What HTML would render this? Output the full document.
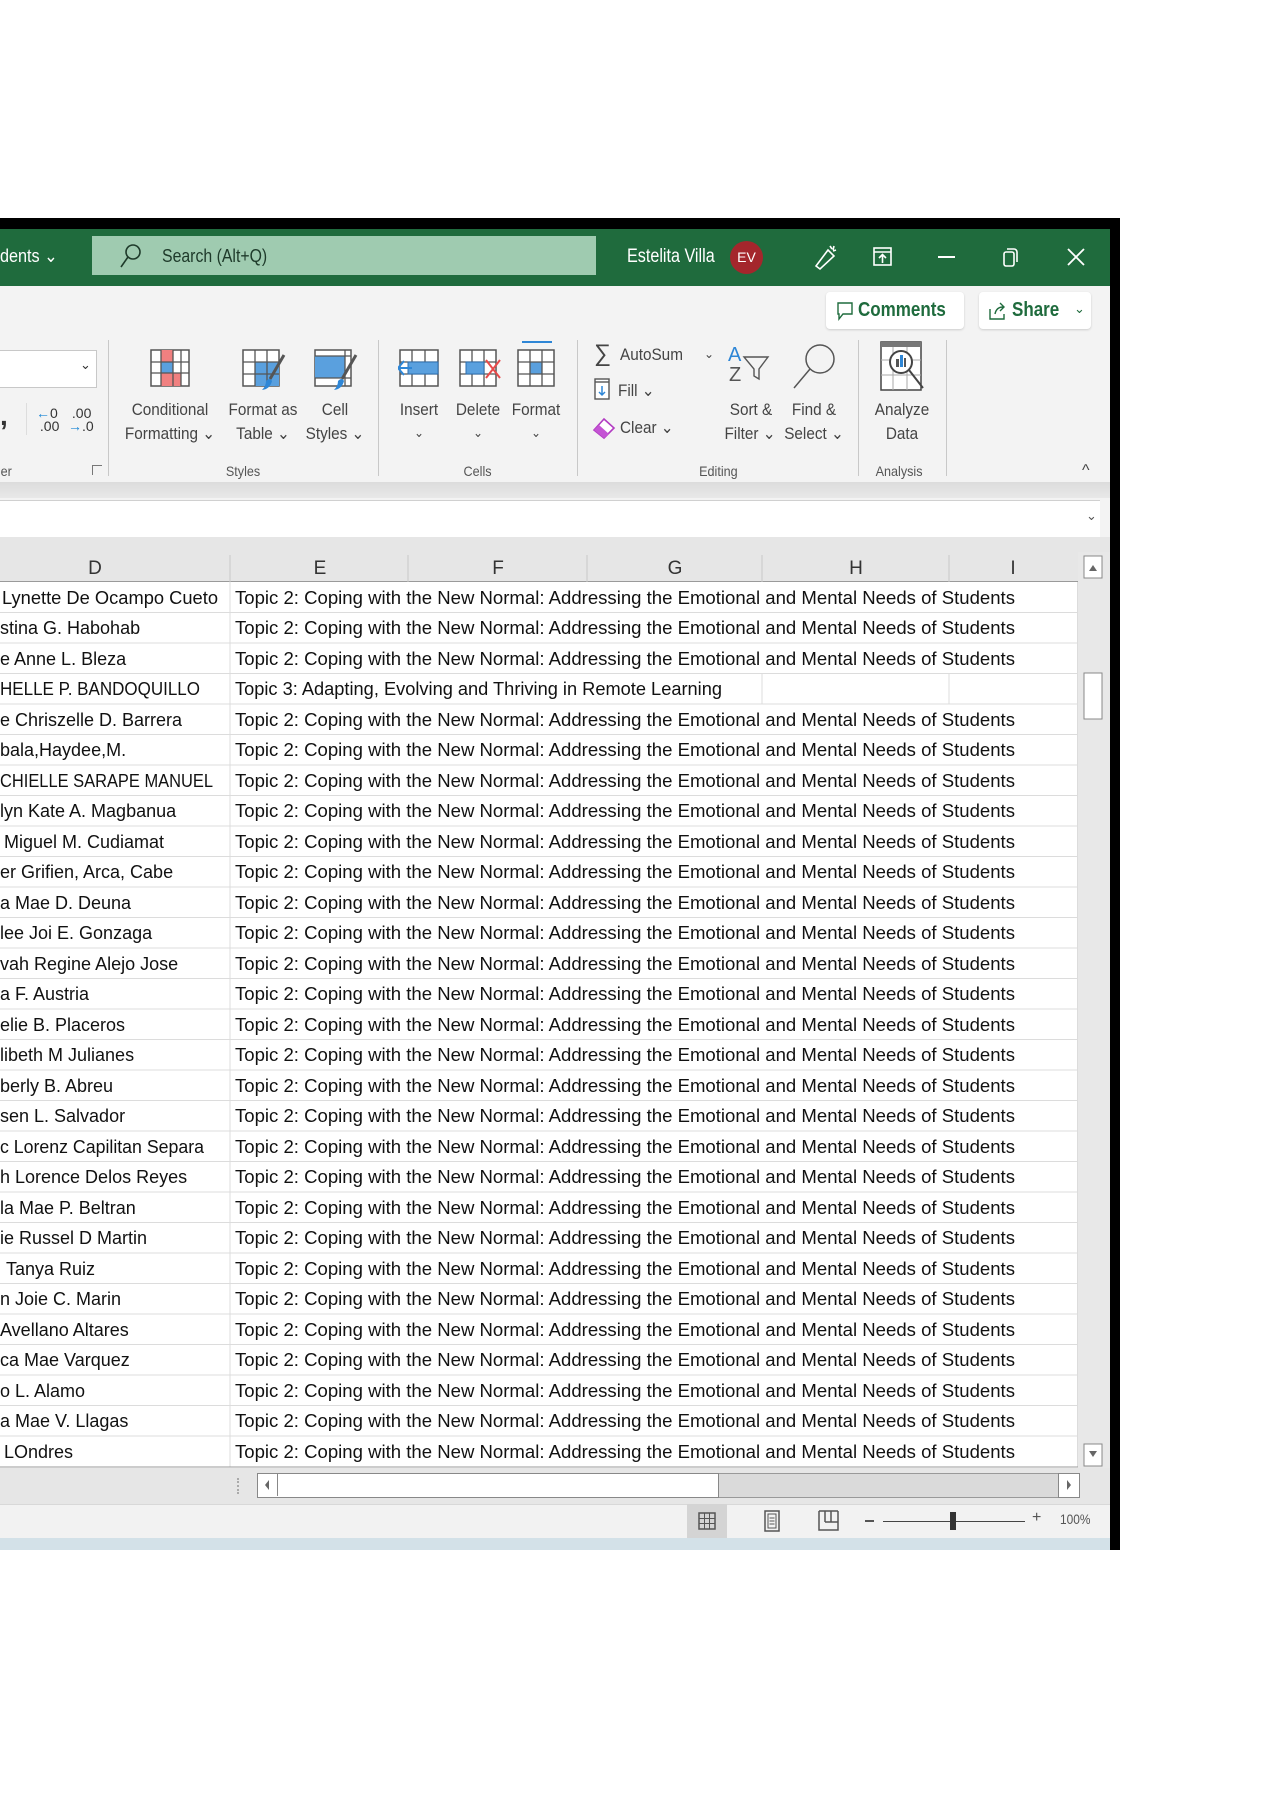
<!DOCTYPE html>
<html><head><meta charset="utf-8"><style>
body{margin:0;width:1273px;height:1800px;background:#fff;position:relative;overflow:hidden;font-family:"Liberation Sans",sans-serif;}
.a{position:absolute;}
.lbl{position:absolute;font-size:16px;color:#444;text-align:center;white-space:nowrap;transform:scaleX(.9);transform-origin:center;}
.g{position:absolute;font-size:14px;color:#555;white-space:nowrap;transform:scaleX(.9);}
.sep{position:absolute;width:1px;background:#c8c8c8;top:340px;height:136px;}
</style></head><body>
<div class="a" style="left:0;top:218px;width:1120px;height:1332px;background:#000"></div>
<div class="a" style="left:0;top:229px;width:1110px;height:1321px;background:#f3f3f3"></div>
<div class="a" style="left:0;top:229px;width:1110px;height:57px;background:#1f6b3d"></div>
<div class="a" style="left:0;top:246px;font-size:18px;color:#fff;transform:scaleX(.9);transform-origin:left">dents ⌄</div>
<div class="a" style="left:92px;top:236px;width:504px;height:39px;background:#9fcbb0"></div>
<svg class="a" style="left:118px;top:242px" width="26" height="28"><circle cx="15" cy="10" r="7" fill="none" stroke="#1e3a2a" stroke-width="1.6"/><line x1="10" y1="15" x2="3" y2="25" stroke="#1e3a2a" stroke-width="1.6"/></svg>
<div class="a" style="left:162px;top:246px;font-size:18px;color:#1e3a2a;transform:scaleX(.88);transform-origin:left">Search (Alt+Q)</div>
<div class="a" style="left:627px;top:246px;font-size:19px;color:#fff;transform:scaleX(.85);transform-origin:left">Estelita Villa</div>
<div class="a" style="left:730px;top:241px;width:33px;height:33px;border-radius:50%;background:#a4262c;color:#fff;font-size:14px;line-height:33px;text-align:center">EV</div>
<svg class="a" style="left:810px;top:242px" width="30" height="30"><path d="M6 24 L18 8 L24 14 L10 27 Z M20 4 l2 3 M24 4 l-1 4 M26 8 l-3 1" fill="none" stroke="#fff" stroke-width="1.6"/></svg>
<svg class="a" style="left:872px;top:246px" width="22" height="22"><rect x="2" y="2" width="17" height="17" fill="none" stroke="#fff" stroke-width="1.6"/><line x1="2" y1="6" x2="19" y2="6" stroke="#fff" stroke-width="1.6"/><path d="M10.5 17 V9 M7 12 l3.5-3.5 3.5 3.5" fill="none" stroke="#fff" stroke-width="1.6"/></svg>
<div class="a" style="left:938px;top:256px;width:17px;height:2px;background:#fff"></div>
<svg class="a" style="left:1000px;top:246px" width="22" height="22"><rect x="4" y="6" width="10" height="14" rx="2" fill="none" stroke="#fff" stroke-width="1.6"/><path d="M7 3 h7 a3 3 0 0 1 3 3 v10" fill="none" stroke="#fff" stroke-width="1.6"/></svg>
<svg class="a" style="left:1066px;top:247px" width="20" height="20"><path d="M2 2 L18 18 M18 2 L2 18" stroke="#fff" stroke-width="1.8"/></svg>
<div class="a" style="left:826px;top:292px;width:138px;height:37px;background:#fff;border-radius:4px;box-shadow:0 1px 2px #ccc"></div>
<svg class="a" style="left:836px;top:301px" width="18" height="20"><path d="M2 2 H16 V13 H7 L3 18 V13 H2 Z" fill="none" stroke="#1f6b3d" stroke-width="1.4"/></svg>
<div class="a" style="left:858px;top:299px;font-size:20px;color:#1f6b3d;font-weight:bold;transform:scaleX(.85);transform-origin:left">Comments</div>
<div class="a" style="left:979px;top:292px;width:112px;height:37px;background:#fff;border-radius:4px;box-shadow:0 1px 2px #ccc"></div>
<svg class="a" style="left:988px;top:301px" width="20" height="20"><path d="M2 8 V18 H16 V13 M7 13 C8 8 11 6 15 6 M12 2 L16 6 L12 10" fill="none" stroke="#1f6b3d" stroke-width="1.4"/></svg>
<div class="a" style="left:1012px;top:299px;font-size:20px;color:#1f6b3d;font-weight:bold;transform:scaleX(.85);transform-origin:left">Share</div>
<div class="a" style="left:1074px;top:301px;font-size:13px;color:#1f6b3d">⌄</div>
<div class="a" style="left:0;top:350px;width:96px;height:36px;background:#fff;border:1px solid #c8c8c8;border-left:none"></div>
<div class="a" style="left:80px;top:357px;font-size:13px;color:#333">⌄</div>
<div class="a" style="left:0;top:400px;font-size:28px;font-weight:bold;color:#333">,</div>
<div class="a" style="left:26px;top:403px;width:1px;height:32px;background:#ddd"></div>
<div class="a" style="left:36px;top:407px;font-size:14px;line-height:13px;color:#333"><span style="color:#1e88d6">←</span>0<br>&nbsp;.00</div>
<div class="a" style="left:68px;top:407px;font-size:14px;line-height:13px;color:#333">&nbsp;.00<br><span style="color:#1e88d6">→</span>.0</div>
<div class="g" style="left:0;top:463px">er</div>
<div class="a" style="left:92px;top:465px;width:9px;height:9px;border:1px solid #777;border-right:none;border-bottom:none"></div>
<div class="sep" style="left:108px"></div>
<svg class="a" style="left:150px;top:349px" width="42" height="40"><rect x="1" y="1" width="38" height="36" fill="#fff" stroke="#555" stroke-width="1.5"/><rect x="11" y="1" width="12" height="12" fill="#f08080"/><rect x="11" y="13" width="12" height="11" fill="#5aa0de"/><rect x="11" y="24" width="20" height="13" fill="#f08080"/><path d="M1 13 H39 M1 24 H39 M11 1 V37 M23 1 V37 M31 1 V37" stroke="#555" stroke-width="1.3"/></svg>
<div class="lbl" style="left:120px;top:400px;width:100px;font-size:17px">Conditional</div>
<div class="lbl" style="left:115px;top:424px;width:110px;font-size:17px">Formatting ⌄</div>
<svg class="a" style="left:242px;top:349px" width="46" height="44"><rect x="1" y="1" width="36" height="36" fill="#fff" stroke="#555" stroke-width="1.5"/><rect x="13" y="13" width="24" height="24" fill="#5aa0de"/><path d="M1 13 H37 M1 25 H37 M13 1 V37 M25 1 V37" stroke="#555" stroke-width="1.3"/><path d="M42 6 L28 30" stroke="#555" stroke-width="3"/><path d="M24 32 q4-4 6 0 q-2 8-10 9 q4-4 4-9z" fill="#2e86d6"/></svg>
<div class="lbl" style="left:218px;top:400px;width:90px;font-size:17px">Format as</div>
<div class="lbl" style="left:218px;top:424px;width:90px;font-size:17px">Table ⌄</div>
<svg class="a" style="left:314px;top:349px" width="46" height="44"><rect x="1" y="1" width="36" height="36" fill="#fff" stroke="#555" stroke-width="1.5"/><rect x="1" y="7" width="30" height="22" fill="#5aa0de"/><path d="M1 7 H37 M31 1 V37 M1 29 H37" stroke="#555" stroke-width="1.3"/><path d="M42 6 L28 30" stroke="#555" stroke-width="3"/><path d="M24 32 q4-4 6 0 q-2 8-10 9 q4-4 4-9z" fill="#2e86d6"/></svg>
<div class="lbl" style="left:300px;top:400px;width:70px;font-size:17px">Cell</div>
<div class="lbl" style="left:295px;top:424px;width:80px;font-size:17px">Styles ⌄</div>
<div class="g" style="left:224px;top:463px">Styles</div>
<div class="sep" style="left:378px"></div>
<svg class="a" style="left:398px;top:348px" width="44" height="40"><rect x="2" y="2" width="38" height="36" fill="#fff" stroke="#555" stroke-width="1.5"/><path d="M2 14 H40 M2 26 H40 M14 2 V38 M27 2 V38" stroke="#555" stroke-width="1.3"/><rect x="10" y="14" width="30" height="12" fill="#5aa0de" stroke="#2e6fb0"/><path d="M14 20 H0 M6 13 L0 20 L6 27" fill="none" stroke="#2e86d6" stroke-width="2"/></svg>
<div class="lbl" style="left:389px;top:400px;width:60px;font-size:17px">Insert</div>
<div class="lbl" style="left:389px;top:425px;width:60px;font-size:13px">⌄</div>
<svg class="a" style="left:458px;top:348px" width="44" height="40"><rect x="2" y="2" width="36" height="36" fill="#fff" stroke="#555" stroke-width="1.5"/><path d="M2 14 H38 M2 26 H38 M14 2 V38 M26 2 V38" stroke="#555" stroke-width="1.3"/><rect x="8" y="14" width="18" height="12" fill="#5aa0de" stroke="#2e6fb0"/><path d="M28 12 L42 30 M42 12 L28 30" stroke="#e84a4a" stroke-width="2"/></svg>
<div class="lbl" style="left:448px;top:400px;width:60px;font-size:17px">Delete</div>
<div class="lbl" style="left:448px;top:425px;width:60px;font-size:13px">⌄</div>
<svg class="a" style="left:516px;top:340px" width="42" height="48"><path d="M6 2 H36" stroke="#2e86d6" stroke-width="2"/><rect x="2" y="10" width="36" height="36" fill="#fff" stroke="#555" stroke-width="1.5"/><rect x="14" y="22" width="12" height="12" fill="#5aa0de"/><path d="M2 22 H38 M2 34 H38 M14 10 V46 M26 10 V46" stroke="#555" stroke-width="1.3"/></svg>
<div class="lbl" style="left:501px;top:400px;width:70px;font-size:17px">Format</div>
<div class="lbl" style="left:506px;top:425px;width:60px;font-size:13px">⌄</div>
<div class="g" style="left:462px;top:463px">Cells</div>
<div class="sep" style="left:577px"></div>
<div class="a" style="left:594px;top:340px;font-size:24px;color:#444">∑</div>
<div class="lbl" style="left:620px;top:345px;text-align:left;transform-origin:left;font-size:17px">AutoSum</div>
<div class="a" style="left:704px;top:347px;font-size:12px;color:#444">⌄</div>
<svg class="a" style="left:594px;top:378px" width="16" height="22"><rect x="1" y="1" width="14" height="20" fill="#fff" stroke="#555" stroke-width="1.4"/><path d="M1 4 H15" stroke="#555" stroke-width="1.4"/><path d="M8 8 V17 M5 14 L8 17 L11 14" fill="none" stroke="#2e86d6" stroke-width="1.5"/></svg>
<div class="lbl" style="left:618px;top:381px;text-align:left;transform-origin:left;font-size:17px">Fill ⌄</div>
<svg class="a" style="left:592px;top:416px" width="24" height="24"><path d="M2 14 L12 3 L22 12 L12 22 Z" fill="#fff" stroke="#b23bc2" stroke-width="1.6"/><path d="M2 14 L7 9 L17 18 L12 22 Z" fill="#c454d4"/></svg>
<div class="lbl" style="left:620px;top:418px;text-align:left;transform-origin:left;font-size:17px">Clear ⌄</div>
<svg class="a" style="left:726px;top:343px" width="48" height="40"><text x="2" y="18" font-size="20" fill="#2e86d6" font-family="Liberation Sans">A</text><text x="3" y="38" font-size="20" fill="#555" font-family="Liberation Sans">Z</text><path d="M18 14 H42 L33 26 V36 L28 33 V26 Z" fill="none" stroke="#555" stroke-width="1.4"/></svg>
<div class="lbl" style="left:720px;top:400px;width:62px;font-size:17px">Sort &amp;</div>
<div class="lbl" style="left:715px;top:424px;width:70px;font-size:17px">Filter ⌄</div>
<svg class="a" style="left:790px;top:342px" width="48" height="50"><circle cx="30" cy="17" r="14" fill="none" stroke="#555" stroke-width="1.5"/><line x1="20" y1="27" x2="4" y2="46" stroke="#555" stroke-width="1.5"/></svg>
<div class="lbl" style="left:783px;top:400px;width:62px;font-size:17px">Find &amp;</div>
<div class="lbl" style="left:778px;top:424px;width:72px;font-size:17px">Select ⌄</div>
<div class="g" style="left:697px;top:463px">Editing</div>
<div class="sep" style="left:858px"></div>
<svg class="a" style="left:879px;top:340px" width="48" height="52"><rect x="2" y="2" width="40" height="48" fill="#fff" stroke="#444" stroke-width="1.5"/><rect x="2" y="2" width="40" height="5" fill="#777"/><path d="M2 20 H42 M2 35 H42 M14 7 V50 M28 7 V50" stroke="#aaa" stroke-width="1"/><circle cx="22" cy="22" r="11" fill="#fff" stroke="#444" stroke-width="2"/><rect x="17" y="19" width="3" height="8" fill="#555"/><rect x="21" y="15" width="3" height="12" fill="#2e86d6"/><rect x="25" y="18" width="2" height="9" fill="#555"/><line x1="30" y1="30" x2="44" y2="48" stroke="#444" stroke-width="2"/></svg>
<div class="lbl" style="left:866px;top:400px;width:72px;font-size:17px">Analyze</div>
<div class="lbl" style="left:866px;top:424px;width:72px;font-size:17px">Data</div>
<div class="g" style="left:873px;top:463px">Analysis</div>
<div class="sep" style="left:946px"></div>
<div class="a" style="left:1082px;top:462px;font-size:16px;color:#444">^</div>
<div class="a" style="left:0;top:482px;width:1110px;height:16px;background:linear-gradient(#dcdcdc,#e8e8e8)"></div>
<div class="a" style="left:0;top:500px;width:1100px;height:36px;background:#fff;border-bottom:1px solid #d0d0d0;border-top:1px solid #d0d0d0"></div>
<div class="a" style="left:1086px;top:508px;font-size:13px;color:#555">⌄</div>
<div class="a" style="left:0;top:537px;width:1110px;height:15px;background:#e6e6e6"></div>
<svg class="a" style="left:0;top:552px" width="1110" height="916" font-family="Liberation Sans" font-size="18" fill="#111">
<rect x="0" y="0" width="1078" height="30" fill="#e6e6e6"/>
<line x1="0" y1="29.5" x2="1078" y2="29.5" stroke="#9a9a9a"/>
<g stroke="#c8c8c8"><line x1="230" y1="3" x2="230" y2="30"/><line x1="408" y1="3" x2="408" y2="30"/><line x1="587" y1="3" x2="587" y2="30"/><line x1="762" y1="3" x2="762" y2="30"/><line x1="949" y1="3" x2="949" y2="30"/></g>
<g font-size="19" fill="#333" text-anchor="middle"><text x="95" y="22">D</text><text x="320" y="22">E</text><text x="498" y="22">F</text><text x="675" y="22">G</text><text x="856" y="22">H</text><text x="1013" y="22">I</text></g>
<rect x="0" y="30" width="1078" height="886" fill="#fff"/>
<rect x="1078" y="0" width="32" height="916" fill="#e8e8e8"/>
<rect x="1084" y="4" width="18" height="22" fill="#fff" stroke="#888"/><path d="M1089 19 L1093 13 L1097 19 Z" fill="#666"/>
<rect x="1084" y="121" width="18" height="46" fill="#fff" stroke="#888"/>
<rect x="1084" y="892" width="18" height="22" fill="#fff" stroke="#888"/><path d="M1089 899 L1093 905 L1097 899 Z" fill="#666"/>
<g stroke="#dcdcdc">
<line x1="0" y1="60.5" x2="1078" y2="60.5"/><line x1="0" y1="91" x2="1078" y2="91"/><line x1="0" y1="121.5" x2="1078" y2="121.5"/><line x1="0" y1="152" x2="1078" y2="152"/><line x1="0" y1="182.5" x2="1078" y2="182.5"/><line x1="0" y1="213" x2="1078" y2="213"/><line x1="0" y1="243.5" x2="1078" y2="243.5"/><line x1="0" y1="274" x2="1078" y2="274"/><line x1="0" y1="304.5" x2="1078" y2="304.5"/><line x1="0" y1="335" x2="1078" y2="335"/><line x1="0" y1="365.5" x2="1078" y2="365.5"/><line x1="0" y1="396" x2="1078" y2="396"/><line x1="0" y1="426.5" x2="1078" y2="426.5"/><line x1="0" y1="457" x2="1078" y2="457"/><line x1="0" y1="487.5" x2="1078" y2="487.5"/><line x1="0" y1="518" x2="1078" y2="518"/><line x1="0" y1="548.5" x2="1078" y2="548.5"/><line x1="0" y1="579" x2="1078" y2="579"/><line x1="0" y1="609.5" x2="1078" y2="609.5"/><line x1="0" y1="640" x2="1078" y2="640"/><line x1="0" y1="670.5" x2="1078" y2="670.5"/><line x1="0" y1="701" x2="1078" y2="701"/><line x1="0" y1="731.5" x2="1078" y2="731.5"/><line x1="0" y1="762" x2="1078" y2="762"/><line x1="0" y1="792.5" x2="1078" y2="792.5"/><line x1="0" y1="823" x2="1078" y2="823"/><line x1="0" y1="853.5" x2="1078" y2="853.5"/><line x1="0" y1="884" x2="1078" y2="884"/>
<line x1="230" y1="30" x2="230" y2="915"/><line x1="762" y1="121.5" x2="762" y2="152"/><line x1="949" y1="121.5" x2="949" y2="152"/><line x1="1077.5" y1="30" x2="1077.5" y2="915"/>
</g>
<line x1="0" y1="915" x2="1078" y2="915" stroke="#999"/>
<g>
<text x="2" y="52" textLength="216" lengthAdjust="spacingAndGlyphs">Lynette De Ocampo Cueto</text>
<text x="0" y="82">stina G. Habohab</text>
<text x="0" y="113">e Anne L. Bleza</text>
<text x="0" y="143" textLength="200" lengthAdjust="spacingAndGlyphs">HELLE P. BANDOQUILLO</text>
<text x="0" y="174">e Chriszelle D. Barrera</text>
<text x="0" y="204">bala,Haydee,M.</text>
<text x="0" y="235" textLength="213" lengthAdjust="spacingAndGlyphs">CHIELLE SARAPE MANUEL</text>
<text x="0" y="265">lyn Kate A. Magbanua</text>
<text x="4" y="296">Miguel M. Cudiamat</text>
<text x="0" y="326">er Grifien, Arca, Cabe</text>
<text x="0" y="357">a Mae D. Deuna</text>
<text x="0" y="387">lee Joi E. Gonzaga</text>
<text x="0" y="418">vah Regine Alejo Jose</text>
<text x="0" y="448">a F. Austria</text>
<text x="0" y="479">elie B. Placeros</text>
<text x="0" y="509">libeth M Julianes</text>
<text x="0" y="540">berly B. Abreu</text>
<text x="0" y="570">sen L. Salvador</text>
<text x="0" y="601" textLength="204" lengthAdjust="spacingAndGlyphs">c Lorenz Capilitan Separa</text>
<text x="0" y="631">h Lorence Delos Reyes</text>
<text x="0" y="662">la Mae P. Beltran</text>
<text x="0" y="692">ie Russel D Martin</text>
<text x="6" y="723">Tanya Ruiz</text>
<text x="0" y="753">n Joie C. Marin</text>
<text x="0" y="784">Avellano Altares</text>
<text x="0" y="814">ca Mae Varquez</text>
<text x="0" y="845">o L. Alamo</text>
<text x="0" y="875">a Mae V. Llagas</text>
<text x="4" y="906">LOndres</text>
</g>
<g font-size="18.5">
<text x="235" y="52" textLength="780" lengthAdjust="spacingAndGlyphs">Topic 2: Coping with the New Normal: Addressing the Emotional and Mental Needs of Students</text>
<text x="235" y="82" textLength="780" lengthAdjust="spacingAndGlyphs">Topic 2: Coping with the New Normal: Addressing the Emotional and Mental Needs of Students</text>
<text x="235" y="113" textLength="780" lengthAdjust="spacingAndGlyphs">Topic 2: Coping with the New Normal: Addressing the Emotional and Mental Needs of Students</text>
<text x="235" y="143" textLength="487" lengthAdjust="spacingAndGlyphs">Topic 3: Adapting, Evolving and Thriving in Remote Learning</text>
<text x="235" y="174" textLength="780" lengthAdjust="spacingAndGlyphs">Topic 2: Coping with the New Normal: Addressing the Emotional and Mental Needs of Students</text>
<text x="235" y="204" textLength="780" lengthAdjust="spacingAndGlyphs">Topic 2: Coping with the New Normal: Addressing the Emotional and Mental Needs of Students</text>
<text x="235" y="235" textLength="780" lengthAdjust="spacingAndGlyphs">Topic 2: Coping with the New Normal: Addressing the Emotional and Mental Needs of Students</text>
<text x="235" y="265" textLength="780" lengthAdjust="spacingAndGlyphs">Topic 2: Coping with the New Normal: Addressing the Emotional and Mental Needs of Students</text>
<text x="235" y="296" textLength="780" lengthAdjust="spacingAndGlyphs">Topic 2: Coping with the New Normal: Addressing the Emotional and Mental Needs of Students</text>
<text x="235" y="326" textLength="780" lengthAdjust="spacingAndGlyphs">Topic 2: Coping with the New Normal: Addressing the Emotional and Mental Needs of Students</text>
<text x="235" y="357" textLength="780" lengthAdjust="spacingAndGlyphs">Topic 2: Coping with the New Normal: Addressing the Emotional and Mental Needs of Students</text>
<text x="235" y="387" textLength="780" lengthAdjust="spacingAndGlyphs">Topic 2: Coping with the New Normal: Addressing the Emotional and Mental Needs of Students</text>
<text x="235" y="418" textLength="780" lengthAdjust="spacingAndGlyphs">Topic 2: Coping with the New Normal: Addressing the Emotional and Mental Needs of Students</text>
<text x="235" y="448" textLength="780" lengthAdjust="spacingAndGlyphs">Topic 2: Coping with the New Normal: Addressing the Emotional and Mental Needs of Students</text>
<text x="235" y="479" textLength="780" lengthAdjust="spacingAndGlyphs">Topic 2: Coping with the New Normal: Addressing the Emotional and Mental Needs of Students</text>
<text x="235" y="509" textLength="780" lengthAdjust="spacingAndGlyphs">Topic 2: Coping with the New Normal: Addressing the Emotional and Mental Needs of Students</text>
<text x="235" y="540" textLength="780" lengthAdjust="spacingAndGlyphs">Topic 2: Coping with the New Normal: Addressing the Emotional and Mental Needs of Students</text>
<text x="235" y="570" textLength="780" lengthAdjust="spacingAndGlyphs">Topic 2: Coping with the New Normal: Addressing the Emotional and Mental Needs of Students</text>
<text x="235" y="601" textLength="780" lengthAdjust="spacingAndGlyphs">Topic 2: Coping with the New Normal: Addressing the Emotional and Mental Needs of Students</text>
<text x="235" y="631" textLength="780" lengthAdjust="spacingAndGlyphs">Topic 2: Coping with the New Normal: Addressing the Emotional and Mental Needs of Students</text>
<text x="235" y="662" textLength="780" lengthAdjust="spacingAndGlyphs">Topic 2: Coping with the New Normal: Addressing the Emotional and Mental Needs of Students</text>
<text x="235" y="692" textLength="780" lengthAdjust="spacingAndGlyphs">Topic 2: Coping with the New Normal: Addressing the Emotional and Mental Needs of Students</text>
<text x="235" y="723" textLength="780" lengthAdjust="spacingAndGlyphs">Topic 2: Coping with the New Normal: Addressing the Emotional and Mental Needs of Students</text>
<text x="235" y="753" textLength="780" lengthAdjust="spacingAndGlyphs">Topic 2: Coping with the New Normal: Addressing the Emotional and Mental Needs of Students</text>
<text x="235" y="784" textLength="780" lengthAdjust="spacingAndGlyphs">Topic 2: Coping with the New Normal: Addressing the Emotional and Mental Needs of Students</text>
<text x="235" y="814" textLength="780" lengthAdjust="spacingAndGlyphs">Topic 2: Coping with the New Normal: Addressing the Emotional and Mental Needs of Students</text>
<text x="235" y="845" textLength="780" lengthAdjust="spacingAndGlyphs">Topic 2: Coping with the New Normal: Addressing the Emotional and Mental Needs of Students</text>
<text x="235" y="875" textLength="780" lengthAdjust="spacingAndGlyphs">Topic 2: Coping with the New Normal: Addressing the Emotional and Mental Needs of Students</text>
<text x="235" y="906" textLength="780" lengthAdjust="spacingAndGlyphs">Topic 2: Coping with the New Normal: Addressing the Emotional and Mental Needs of Students</text>
</g>
</svg>
<div class="a" style="left:0;top:1468px;width:1110px;height:36px;background:#e6e6e6"></div>
<div class="a" style="left:237px;top:1478px;width:2px;height:16px;border-left:2px dotted #aaa"></div>
<div class="a" style="left:257px;top:1473px;width:810px;height:23px;background:#dadada;border:1px solid #999"></div>
<div class="a" style="left:257px;top:1473px;width:460px;height:23px;background:#fff;border:1px solid #888"></div>
<div class="a" style="left:257px;top:1473px;width:20px;height:23px;border-right:1px solid #888"></div>
<svg class="a" style="left:262px;top:1478px" width="10" height="14"><path d="M7 2 L3 7 L7 12 Z" fill="#666"/></svg>
<div class="a" style="left:1058px;top:1473px;width:20px;height:23px;background:#fff;border:1px solid #888"></div>
<svg class="a" style="left:1064px;top:1478px" width="10" height="14"><path d="M3 2 L7 7 L3 12 Z" fill="#666"/></svg>
<div class="a" style="left:0;top:1504px;width:1110px;height:34px;background:#f2f2f2;border-top:1px solid #d8d8d8"></div>
<div class="a" style="left:687px;top:1504px;width:40px;height:34px;background:#d4d4d4"></div>
<svg class="a" style="left:698px;top:1512px" width="18" height="18"><rect x="1" y="1" width="16" height="16" fill="none" stroke="#555" stroke-width="1.5"/><path d="M1 6.5 H17 M1 11.5 H17 M6.5 1 V17 M11.5 1 V17" stroke="#555"/></svg>
<svg class="a" style="left:764px;top:1510px" width="16" height="22"><rect x="1" y="1" width="14" height="20" fill="none" stroke="#555" stroke-width="1.5"/><rect x="4" y="4" width="8" height="14" fill="none" stroke="#555"/><path d="M5.5 8 H10.5 M5.5 11 H10.5 M5.5 14 H10.5" stroke="#555"/></svg>
<svg class="a" style="left:818px;top:1510px" width="22" height="22"><path d="M1 1 V20 H20 V1 M1 1 H20 M7 1 V12 M13 1 V12 M7 12 H20" fill="none" stroke="#555" stroke-width="1.5"/></svg>
<div class="a" style="left:865px;top:1520px;width:9px;height:1.5px;background:#555"></div>
<div class="a" style="left:883px;top:1521px;width:142px;height:1px;background:#444"></div>
<div class="a" style="left:950px;top:1512px;width:6px;height:18px;background:#333"></div>
<div class="a" style="left:1032px;top:1509px;font-size:16px;color:#555">+</div>
<div class="a" style="left:1060px;top:1511px;font-size:14px;color:#555;transform:scaleX(.85);transform-origin:left">100%</div>
<div class="a" style="left:0;top:1538px;width:1110px;height:12px;background:#d3e1e8"></div>
</body></html>
